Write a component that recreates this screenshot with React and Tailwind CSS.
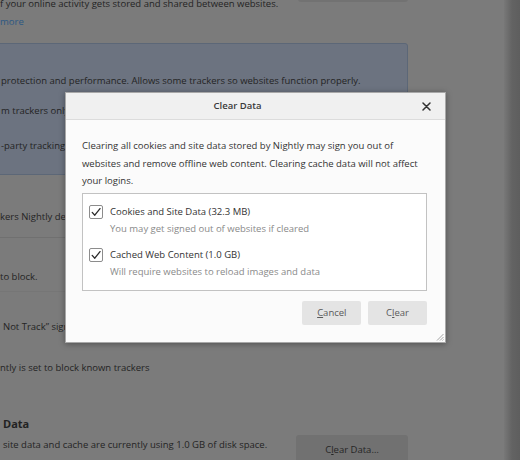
function Check() {
  return (
    <div className="w-[14px] h-[14px] shrink-0 border border-[#8c8c8c] rounded-[2px] bg-white flex items-center justify-center">
      <svg width="12" height="12" viewBox="0 0 12 12" fill="none">
        <path d="M2.2 6.4 L4.8 9.2 L10 2.6" stroke="#2b2b2b" strokeWidth="1.3" strokeLinecap="round" strokeLinejoin="round" />
      </svg>
    </div>
  );
}

function Option({ label, sub, className = "" }) {
  return (
    <div className={"flex items-start " + className}>
      <div className="h-[16.6px] flex items-center">
        <Check />
      </div>
      <div className="ml-[7px] leading-[16.6px]">
        <div className="whitespace-nowrap text-[#333333]">{label}</div>
        <div className="whitespace-nowrap text-[#8a8a8a]">{sub}</div>
      </div>
    </div>
  );
}

export default function App() {
  return (
    <div className="relative w-[520px] h-[460px] overflow-hidden bg-[#7b7b7b] font-['Open_Sans',sans-serif] text-[9.5px] text-[#242424]">
      <div className="flex">
        <div className="w-[408px] shrink-0 flex flex-col leading-[17.5px]">
          <div className="shrink-0 flex justify-between -mt-[27px]">
            <div className="pt-[22px]">
              <div className="whitespace-nowrap">f your online activity gets stored and shared between websites.</div>
              <div className="text-[#2c5883]">more</div>
            </div>
            <div className="w-[110px] h-[29px] bg-[#727272] rounded-[3px]" />
          </div>

          <div className="shrink-0 mt-[13px] -ml-[6px] h-[132px] bg-[#6c7380] border border-[#5c6777] rounded-[3px] pl-[6px] pt-[28px]">
            <div className="whitespace-nowrap">protection and performance. Allows some trackers so websites function properly.</div>
            <div className="mt-[12px] whitespace-nowrap">m trackers only in Private Windows</div>
            <div className="mt-[17.5px] whitespace-nowrap">-party tracking cookies</div>
          </div>

          <div className="shrink-0 mt-[33px] whitespace-nowrap">kers Nightly detects</div>
          <div className="shrink-0 mt-[11px] h-px bg-[#707070]" />
          <div className="shrink-0 mt-[30px] whitespace-nowrap">to block.</div>
          <div className="shrink-0 mt-[6px] h-px bg-[#767676]" />
          <div className="shrink-0 mt-[26px] pl-[3px] whitespace-nowrap">Not Track” signal that you don’t want to be tracked</div>
          <div className="shrink-0 mt-[23.5px] whitespace-nowrap">ntly is set to block known trackers</div>
          <div className="shrink-0 mt-[39px] pl-[3px] text-[11px] leading-[15px] font-bold text-[#222222]">Data</div>
          <div className="shrink-0 flex justify-between items-start mt-[4px]">
            <div className="pl-[3px] whitespace-nowrap mt-[1px]">site data and cache are currently using 1.0 GB of disk space.</div>
            <div className="w-[112px] h-[30px] bg-[#717171] rounded-[3px] flex items-center justify-center text-[#262626]">
              <span>C<span className="underline">l</span>ear Data…</span>
            </div>
          </div>
        </div>
        <div className="flex-1" />
        <div className="w-[16px] bg-linear-to-r from-[#787878] via-[#636363] to-[#5e5e5e]" />
      </div>

      <div className="absolute left-[65px] top-[92px] w-[381px] h-[251px] bg-[#fbfbfb] border border-[#a8a8a8] shadow-[0_1px_6px_rgba(0,0,0,0.35)] flex flex-col">
        <div className="relative h-[27px] shrink-0 bg-[#f0f0f0] border-b border-[#dcdcdc] flex items-center">
          <div className="flex-1 pr-[36px] text-center font-semibold text-[#3a3a3a]">Clear Data</div>
          <svg className="absolute right-[14px] top-[9px]" width="9" height="9" viewBox="0 0 9 9" fill="none">
            <path d="M1 1 L8 8 M8 1 L1 8" stroke="#333333" strokeWidth="1.5" strokeLinecap="round" />
          </svg>
        </div>
        <div className="flex flex-col pl-[16px] pr-[18px] pt-[17px] text-[#333333]">
          <div className="leading-[17.5px] whitespace-nowrap">
            Clearing all cookies and site data stored by Nightly may sign you out of
            <br />
            websites and remove offline web content. Clearing cache data will not affect
            <br />
            your logins.
          </div>
          <div className="mt-[3.5px] h-[98.4px] border border-[#c2c2c2] bg-white pl-[6px] pt-[10px]">
            <Option label="Cookies and Site Data (32.3 MB)" sub="You may get signed out of websites if cleared" />
            <Option className="mt-[10px]" label="Cached Web Content (1.0 GB)" sub="Will require websites to reload images and data" />
          </div>
          <div className="mt-[10px] flex justify-end gap-[6.7px]">
            <div className="w-[59px] h-[23.3px] bg-[#e4e4e4] rounded-[2px] flex items-center justify-center text-[#5a5a5a]">
              <span><span className="underline">C</span>ancel</span>
            </div>
            <div className="w-[59px] h-[23.3px] bg-[#e4e4e4] rounded-[2px] flex items-center justify-center text-[#5a5a5a]">
              <span>C<span className="underline">l</span>ear</span>
            </div>
          </div>
        </div>
        <svg className="absolute right-[1px] bottom-[1px]" width="9" height="9" viewBox="0 0 9 9" fill="none">
          <path d="M8.5 2 L2 8.5 M8.5 5 L5 8.5 M8.5 7.5 L7.5 8.5" stroke="#9a9a9a" strokeWidth="0.9" />
        </svg>
      </div>
    </div>
  );
}
